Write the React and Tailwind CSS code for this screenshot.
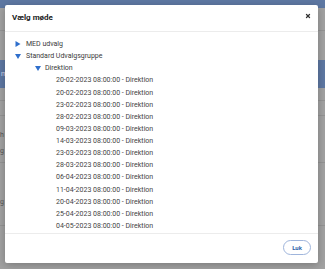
import { X } from "lucide-react";

const dates = [
    "20-02-2023",
    "20-02-2023",
    "23-02-2023",
    "28-02-2023",
    "09-03-2023",
    "14-03-2023",
    "23-03-2023",
    "28-03-2023",
    "06-04-2023",
    "11-04-2023",
    "20-04-2023",
    "25-04-2023",
    "04-05-2023",
];

const Caret = ({ open }) => (
    <svg width="6" height="6" viewBox="0 0 6 6" className="shrink-0">
        {open ? <polygon points="0,1 6,1 3,6" fill="#2f6fcc" /> : <polygon points="0.5,0 5.5,3 0.5,6" fill="#2f6fcc" />}
    </svg>
);

const App = () => {
    return (
        <div className="relative w-[325px] h-[269px] overflow-hidden bg-[#a2a2a2] font-['Roboto',sans-serif]">
            {/* page behind the overlay */}
            <div className="flex flex-col h-full">
                <div className="h-[8px] bg-[#5e78a3]"></div>
                <div className="h-[22px]"></div>
                <div className="h-px bg-[#949494]"></div>
                <div className="h-[29px]"></div>
                <div className="h-[28px] bg-[#5e78a3] text-[7px] text-[#dde] flex items-center">
                    <span className="ml-[1px]">m</span>
                </div>
                <div className="h-[12px]"></div>
                <div className="h-px bg-[#949494]"></div>
                <div className="h-[14px]"></div>
                <div className="h-px bg-[#949494]"></div>
                <div className="h-[24px] text-[7px] text-[#555] flex items-end"><span>h</span></div>
                <div className="h-[22px] text-[7px] text-[#555] flex items-center"><span>g</span></div>
                <div className="h-px bg-[#949494]"></div>
                <div className="h-[44px] text-[7px] text-[#555] flex items-end"><span>g</span></div>
                <div className="h-[18px]"></div>
                <div className="h-px bg-[#949494]"></div>
            </div>

            {/* modal */}
            <div className="absolute left-[5px] top-[5px] w-[313px] h-[258px] bg-white rounded-[2px] shadow-[0_2px_8px_rgba(0,0,0,0.25)] flex flex-col">
                <div className="h-[27px] shrink-0 flex items-center justify-between pl-[7px] pr-[7px] border-b border-[#ececec]">
                    <h3 className="text-[8px] font-bold text-[#222]">Vælg møde</h3>
                    <X className="w-[6px] h-[6px] text-[#333] -mt-[4px]" strokeWidth={5} />
                </div>
                <div className="flex-1 overflow-hidden pl-[10px] pt-[6px] text-[7px] leading-[12.13px] text-[#3a3a3a]">
                    <div className="flex items-center gap-[5px]">
                        <Caret open={false} />
                        <span>MED udvalg</span>
                    </div>
                    <div className="flex items-center gap-[5px]">
                        <Caret open={true} />
                        <span>Standard Udvalgsgruppe</span>
                    </div>
                    <div className="flex items-center gap-[4px] pl-[20px]">
                        <Caret open={true} />
                        <span>Direktion</span>
                    </div>
                    {dates.map((d, i) => (
                        <div key={i} className="pl-[41px] text-[#444]">
                            {d} 08:00:00 - Direktion
                        </div>
                    ))}
                </div>
                <div className="h-[30px] shrink-0 border-t border-[#ececec] flex items-center justify-end pr-[7px]">
                    <button className="w-[28px] h-[15px] rounded-full border border-[#9fb5dc] text-[6px] font-bold text-[#2f5fa8] flex items-center justify-center mb-[2px]">
                        Luk
                    </button>
                </div>
            </div>
        </div>
    );
};

export default App;
